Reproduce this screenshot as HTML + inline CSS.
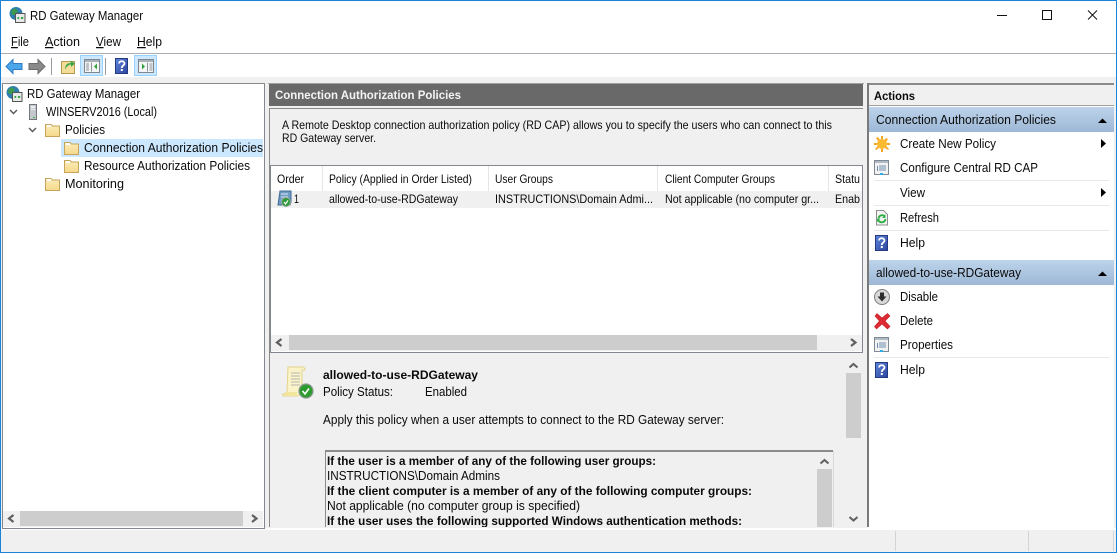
<!DOCTYPE html>
<html><head><meta charset="utf-8"><title>RD Gateway Manager</title>
<style>
html,body{margin:0;padding:0;background:#fff;width:1117px;height:553px;overflow:hidden}
svg{display:block}
text{font-family:"Liberation Sans",sans-serif;font-size:12.5px;fill:#0a0a0a;white-space:pre}
.b{font-weight:bold;font-size:12px}
.s{font-size:12px}
</style></head><body>
<svg width="1117" height="553" viewBox="0 0 1117 553" xmlns="http://www.w3.org/2000/svg">
<defs>
<linearGradient id="hd" x1="0" y1="0" x2="0" y2="1"><stop offset="0" stop-color="#bdd4ea"/><stop offset="1" stop-color="#9db7d5"/></linearGradient>
<linearGradient id="fold" x1="0" y1="0" x2="0" y2="1"><stop offset="0" stop-color="#fcecb8"/><stop offset="1" stop-color="#f5d98c"/></linearGradient>
<linearGradient id="hp" x1="0" y1="0" x2="1" y2="1"><stop offset="0" stop-color="#5f86dc"/><stop offset="1" stop-color="#2c459c"/></linearGradient>
<clipPath id="box"><rect x="326" y="452" width="491" height="75"/></clipPath>
<g id="folder"><path d="M0.500 13.500V1.500H6l1.500 1.500H14.500V13.500Z" fill="url(#fold)" stroke="#c6a55a"/><rect x="2" y="2" width="4" height="2" fill="#fff"/></g>
<g id="help"><rect x=".5" y=".5" width="12" height="15" fill="url(#hp)" stroke="#24397f"/><path d="M4 5.500c0-3 5.500-3 5.500 0 0 2-2.700 2-2.700 4.500" fill="none" stroke="#fff" stroke-width="1.800"/><rect x="5.800" y="11" width="2" height="2" fill="#fff"/></g>
<g id="props"><rect x=".5" y=".5" width="14" height="14" fill="#f2f2f2" stroke="#7f8a96" stroke-width="1"/><rect x="1" y="1" width="13" height="2" fill="#b0bbc6"/><path d="M5 6h7M5 8h7M5 10h7" stroke="#6d8eb0"/><rect x="3" y="6" width="1" height="5" fill="#6d8eb0"/><rect x="6" y="13" width="3" height="2" fill="#2bb0ef"/></g>
<g id="globe"><circle cx="7" cy="6.500" r="6.500" fill="#2f7eae"/><path d="M2 4l4-3 3 3-3 4-3 0zM8 8l3 0 0 2-3 2z" fill="#3c9a4f"/><rect x="6.500" y="6.500" width="9.500" height="9" fill="#e8eae8" stroke="#555"/><path d="M8.500 11h1.700M12 11h2.200" stroke="#1f9a2f" stroke-width="1.700"/></g>
</defs>

<rect width="1117" height="553" fill="#fff"/>
<rect x="0" y="77" width="1117" height="476" fill="#f0f0f0"/>
<rect x="1" y="53" width="1115" height="1" fill="#a9adb5"/>

<!-- Title -->
<use href="#globe" x="9" y="7"/>
<text x="30" y="20" textLength="113" lengthAdjust="spacingAndGlyphs">RD Gateway Manager</text>
<path d="M997 15.500h10" stroke="#111"/>
<rect x="1042.500" y="10.500" width="9" height="9" fill="none" stroke="#111"/>
<path d="M1088 10.500l9 9M1097 10.500l-9 9" stroke="#111" fill="none"/>

<!-- Menu -->
<text x="11" y="46" textLength="18" lengthAdjust="spacingAndGlyphs"><tspan text-decoration="underline">F</tspan>ile</text>
<text x="45" y="46" textLength="35" lengthAdjust="spacingAndGlyphs"><tspan text-decoration="underline">A</tspan>ction</text>
<text x="96" y="46" textLength="25" lengthAdjust="spacingAndGlyphs"><tspan text-decoration="underline">V</tspan>iew</text>
<text x="137" y="46" textLength="25" lengthAdjust="spacingAndGlyphs"><tspan text-decoration="underline">H</tspan>elp</text>

<!-- Toolbar -->
<path d="M6 66.500l7-7v4h9v6h-9v4z" fill="#4ba6ea" stroke="#2f7cc4"/>
<path d="M45 66.500l-7-7v4h-9v6h9v4z" fill="#8a8a8a" stroke="#6b6b6b"/>
<rect x="51" y="58" width="1" height="17" fill="#9b9b9b"/>
<path d="M61.500 73.500V61.500H74.500V73.500Z" fill="#f3dc98" stroke="#b59a50"/>
<path d="M65 70c0-5 2-7 6-7l-1-2.500 5 3-4 3.500v-2.500c-2 0-5 2-6 5.500z" fill="#3aa54a"/>
<rect x="80.500" y="55.500" width="22" height="20" fill="#cce8ff" stroke="#99d1ff"/>
<rect x="84.500" y="59.500" width="15" height="13" fill="#f5f5f5" stroke="#7f8790"/>
<rect x="85" y="60" width="14" height="2" fill="#a9b1b9"/>
<path d="M86 64h3M86 66h3M86 68h3M86 70h3" stroke="#8a929a"/>
<path d="M91.500 62.500v9" stroke="#8a929a"/>
<path d="M97 63.500v6l-3-3z" fill="#2ea33d"/>
<rect x="105" y="58" width="1" height="17" fill="#9b9b9b"/>
<use href="#help" x="115" y="58"/>
<rect x="134.500" y="55.500" width="22" height="20" fill="#cce8ff" stroke="#99d1ff"/>
<rect x="138.500" y="59.500" width="15" height="13" fill="#f5f5f5" stroke="#7f8790"/>
<rect x="139" y="60" width="14" height="2" fill="#a9b1b9"/>
<path d="M149.500 64h3M149.500 66h3M149.500 68h3M149.500 70h3" stroke="#8a929a"/>
<path d="M147.500 62.500v9" stroke="#8a929a"/>
<path d="M142 63.500v6l3-3z" fill="#2ea33d"/>

<!-- Tree panel -->
<rect x="2.500" y="83.500" width="262" height="445" fill="#fff" stroke="#828790"/>
<rect x="2" y="83" width="263" height="1" fill="#8a8a8a"/>
<use href="#globe" x="6" y="86"/>
<text x="27" y="98" textLength="113" lengthAdjust="spacingAndGlyphs">RD Gateway Manager</text>
<path d="M10 110l3.500 3.500 3.500-3.500" fill="none" stroke="#555" stroke-width="1.400"/>
<rect x="29.500" y="104.500" width="7" height="15" fill="#c4c8cc" stroke="#73777d"/>
<rect x="31" y="106" width="4" height="2" fill="#eee"/><rect x="31" y="109" width="4" height="1" fill="#eee"/><rect x="33" y="117" width="2" height="1" fill="#3ab54a"/>
<text x="46" y="116" textLength="111" lengthAdjust="spacingAndGlyphs">WINSERV2016 (Local)</text>
<path d="M29 128l3.500 3.500 3.500-3.500" fill="none" stroke="#555" stroke-width="1.400"/>
<use href="#folder" x="45" y="123"/>
<text x="65" y="134" textLength="40" lengthAdjust="spacingAndGlyphs">Policies</text>
<rect x="61" y="139" width="202" height="18" fill="#cce8ff"/>
<use href="#folder" x="64" y="141"/>
<text x="84" y="152" textLength="179" lengthAdjust="spacingAndGlyphs">Connection Authorization Policies</text>
<use href="#folder" x="64" y="159"/>
<text x="84" y="170" textLength="166" lengthAdjust="spacingAndGlyphs">Resource Authorization Policies</text>
<use href="#folder" x="45" y="177"/>
<text x="65" y="188" textLength="59" lengthAdjust="spacingAndGlyphs">Monitoring</text>
<rect x="3" y="511" width="260" height="16" fill="#f0f0f0"/>
<rect x="20" y="511" width="223" height="15" fill="#cdcdcd"/>
<path d="M13.500 515l-4.500 3.500 4.500 3.500M252 515l4.500 3.500-4.500 3.500" fill="none" stroke="#606060" stroke-width="2.200"/>

<!-- Center -->
<rect x="268" y="83" width="596" height="1" fill="#a0a0a0"/>
<rect x="269" y="84" width="594" height="22" fill="#696969"/>
<text x="275" y="99" class="b" textLength="186" lengthAdjust="spacingAndGlyphs" style="fill:#f4f4f4">Connection Authorization Policies</text>
<rect x="269" y="108" width="594" height="419" fill="#f0f0f0"/>
<rect x="269" y="108" width="594" height="1" fill="#8a8a8a"/>
<rect x="269" y="108" width="1" height="419" fill="#8a8a8a"/>
<text x="282" y="129" class="s" textLength="550" lengthAdjust="spacingAndGlyphs">A Remote Desktop connection authorization policy (RD CAP) allows you to specify the users who can connect to this</text>
<text x="282" y="142" class="s" textLength="94" lengthAdjust="spacingAndGlyphs">RD Gateway server.</text>

<!-- List -->
<rect x="270.500" y="165.500" width="592" height="187" fill="#fff" stroke="#828790"/>
<rect x="271" y="191" width="591" height="17" fill="#f0f0f0"/>
<path d="M322.500 166v25M488.500 166v25M657.500 166v25M828.500 166v25" stroke="#e5e5e5"/>
<text x="277" y="183" class="s" textLength="27" lengthAdjust="spacingAndGlyphs">Order</text>
<text x="329" y="183" class="s" textLength="143" lengthAdjust="spacingAndGlyphs">Policy (Applied in Order Listed)</text>
<text x="495" y="183" class="s" textLength="58" lengthAdjust="spacingAndGlyphs">User Groups</text>
<text x="665" y="183" class="s" textLength="110" lengthAdjust="spacingAndGlyphs">Client Computer Groups</text>
<text x="835" y="183" class="s" textLength="25" lengthAdjust="spacingAndGlyphs">Statu</text>
<path d="M278 205l2-14h11v11l-1 3z" fill="#6f9cc6" stroke="#3f6a94"/>
<path d="M281 194h7M281 197h7M281 200h4" stroke="#dce7f0"/>
<circle cx="286" cy="202" r="4.500" fill="#2f9a3a" stroke="#9aa7a0"/>
<path d="M284 202l1.500 2 2.500-3.500" fill="none" stroke="#fff" stroke-width="1.200"/>
<text x="294" y="203" class="s" textLength="5" lengthAdjust="spacingAndGlyphs">1</text>
<text x="329" y="203" class="s" textLength="129" lengthAdjust="spacingAndGlyphs">allowed-to-use-RDGateway</text>
<text x="495" y="203" class="s" textLength="158" lengthAdjust="spacingAndGlyphs">INSTRUCTIONS\Domain Admi...</text>
<text x="665" y="203" class="s" textLength="154" lengthAdjust="spacingAndGlyphs">Not applicable (no computer gr...</text>
<text x="835" y="203" class="s" textLength="25" lengthAdjust="spacingAndGlyphs">Enab</text>
<rect x="271" y="335" width="591" height="16" fill="#f0f0f0"/>
<rect x="289" y="335" width="528" height="15" fill="#cdcdcd"/>
<path d="M281.500 339l-4.500 3.500 4.500 3.500M851 339l4.500 3.500-4.500 3.500" fill="none" stroke="#606060" stroke-width="2.200"/>

<!-- Details -->
<path d="M288 367h14c2 0 3 1 3 3h-3v21h-2c0 3-1 5-3 5h-13c-1 0-2-1-1-2l4-1z" fill="#fbf3c8" stroke="#e2d48e"/>
<path d="M285 392h12v4h-12z" fill="#f2e59e"/>
<path d="M291 373h9M291 376h9M291 379h9M291 382h9M291 385h9" stroke="#b4b4b4"/>
<circle cx="306" cy="391" r="7" fill="#2c9a2e" stroke="#8c9a90" stroke-width="1.200"/>
<path d="M302.500 391l2.500 3 4-5.500" fill="none" stroke="#fff" stroke-width="1.600"/>
<text x="323" y="379" class="b" textLength="155" lengthAdjust="spacingAndGlyphs">allowed-to-use-RDGateway</text>
<text x="323" y="396" textLength="70" lengthAdjust="spacingAndGlyphs">Policy Status:</text>
<text x="425" y="396" textLength="42" lengthAdjust="spacingAndGlyphs">Enabled</text>
<text x="323" y="424" textLength="401" lengthAdjust="spacingAndGlyphs">Apply this policy when a user attempts to connect to the RD Gateway server:</text>
<rect x="846" y="356" width="15" height="171" fill="#f0f0f0"/>
<rect x="846" y="373" width="15" height="65" fill="#cdcdcd"/>
<path d="M849.500 367.500l4-3.500 4 3.500M849.500 517l4 3.500 4-3.500" fill="none" stroke="#606060" stroke-width="2"/>

<!-- Inner box -->
<rect x="325" y="450" width="508" height="2" fill="#8a8a8a"/>
<rect x="325" y="450" width="1" height="77" fill="#8a8a8a"/>
<rect x="833" y="451" width="1" height="76" fill="#d9d9d9"/>
<rect x="817" y="469" width="15" height="58" fill="#cdcdcd"/>
<path d="M820.500 463.500l4-3.500 4 3.500" fill="none" stroke="#606060" stroke-width="2"/>
<g clip-path="url(#box)">
<text x="327" y="465" class="b" textLength="329" lengthAdjust="spacingAndGlyphs">If the user is a member of any of the following user groups:</text>
<text x="327" y="480" textLength="173" lengthAdjust="spacingAndGlyphs">INSTRUCTIONS\Domain Admins</text>
<text x="327" y="495" class="b" textLength="425" lengthAdjust="spacingAndGlyphs">If the client computer is a member of any of the following computer groups:</text>
<text x="327" y="510" textLength="253" lengthAdjust="spacingAndGlyphs">Not applicable (no computer group is specified)</text>
<text x="327" y="525" class="b" textLength="415" lengthAdjust="spacingAndGlyphs">If the user uses the following supported Windows authentication methods:</text>
</g>

<!-- Actions -->
<rect x="868" y="83" width="246" height="445" fill="#fff"/>
<rect x="867" y="83" width="247" height="2" fill="#8a8a8a"/>
<rect x="867" y="83" width="2" height="444" fill="#7a7a7a"/>
<rect x="869" y="85" width="245" height="20" fill="#f0f0f0"/>
<rect x="869" y="105" width="245" height="1" fill="#a0a0a0"/>
<text x="874" y="100" class="b" textLength="41" lengthAdjust="spacingAndGlyphs">Actions</text>
<rect x="869" y="107" width="245" height="25" fill="url(#hd)"/>
<text x="876" y="124" textLength="180" lengthAdjust="spacingAndGlyphs">Connection Authorization Policies</text>
<path d="M1098 123l4.500-4.500 4.500 4.500z" fill="#000"/>
<path d="M881 136h2v3h-2zM881 149h2v3h-2zM874 143h3v2h-3zM887 143h3v2h-3zM876 138l2-1 2 3-2 1zM886 138l2 1-2 3-2-1zM876 150l-1-1 3-3 1 2zM888 150l1-1-3-3-1 2z" fill="#f5a623"/>
<circle cx="882" cy="144" r="5" fill="#fbb92e"/>
<text x="900" y="148" textLength="96" lengthAdjust="spacingAndGlyphs">Create New Policy</text>
<path d="M1101 139v9l5-4.500z" fill="#000"/>
<use href="#props" x="874" y="160"/>
<text x="900" y="172" textLength="138" lengthAdjust="spacingAndGlyphs">Configure Central RD CAP</text>
<path d="M874 180.500h235M874 205.500h235M874 230.500h235M874 357.500h235" stroke="#e8e8e8"/>
<text x="900" y="197" textLength="25" lengthAdjust="spacingAndGlyphs">View</text>
<path d="M1101 188v9l5-4.500z" fill="#000"/>
<path d="M876.500 210.500h7l4 4v10.500h-11z" fill="#f4f4f4" stroke="#909090"/>
<path d="M885.500 219a3.800 3.800 0 0 1-7 1.500M878.500 218a3.800 3.800 0 0 1 6-2" fill="none" stroke="#2fae44" stroke-width="1.900"/>
<path d="M885.500 214.500v3.500h-3.500zM877 222v-3.500h3.500z" fill="#2fae44"/>
<text x="900" y="222" textLength="39" lengthAdjust="spacingAndGlyphs">Refresh</text>
<use href="#help" x="875" y="235"/>
<text x="900" y="247" textLength="25" lengthAdjust="spacingAndGlyphs">Help</text>

<rect x="869" y="260" width="245" height="25" fill="url(#hd)"/>
<text x="876" y="277" textLength="145" lengthAdjust="spacingAndGlyphs">allowed-to-use-RDGateway</text>
<path d="M1098 276l4.500-4.500 4.500 4.500z" fill="#000"/>
<circle cx="882" cy="297" r="7.500" fill="#d8d8d8" stroke="#7d7d7d"/>
<path d="M880 292.500h4v4h2.500l-4.500 5-4.500-5h2.500z" fill="#2c2c2c"/>
<text x="900" y="301" textLength="38" lengthAdjust="spacingAndGlyphs">Disable</text>
<path d="M875 316l2-2.500 5 4.500 5.500-4.500 2.500 2.500-5 5 5 5.500-2.500 2.500-5.500-5-5.500 5-2-2.500 5-5.500z" fill="#de2a32" stroke="#c41e26" stroke-width=".6"/>
<text x="900" y="325" textLength="33" lengthAdjust="spacingAndGlyphs">Delete</text>
<use href="#props" x="874" y="337"/>
<text x="900" y="349" textLength="53" lengthAdjust="spacingAndGlyphs">Properties</text>
<use href="#help" x="875" y="362"/>
<text x="900" y="374" textLength="25" lengthAdjust="spacingAndGlyphs">Help</text>

<!-- Status bar -->
<rect x="1" y="528" width="1115" height="2" fill="#fff"/>
<rect x="1" y="530" width="1115" height="22" fill="#f0f0f0"/>
<path d="M895.500 531v20M1028.500 531v20M1113.500 531v20" stroke="#d4d4d4"/>
<rect x="2" y="528" width="263" height="1" fill="#828790"/>

<!-- Window border -->
<rect x=".5" y=".5" width="1116" height="552" fill="none" stroke="#1883d7"/>
</svg>
</body></html>
